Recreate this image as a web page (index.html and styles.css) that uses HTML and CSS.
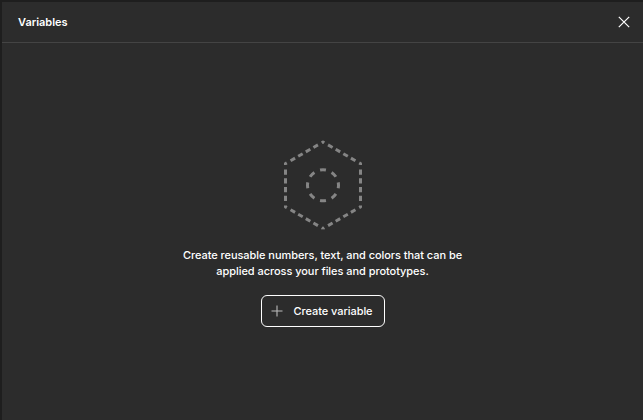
FILE: index.html
```html
<!DOCTYPE html>
<html lang="en">
<head>
<meta charset="utf-8">
<title>Variables</title>
<link rel="stylesheet" href="styles.css">
</head>
<body>
<section class="panel">
  <header class="header">
    <h1 class="title">Variables</h1>
    <button class="close" aria-label="Close">
      <svg width="12" height="12" viewBox="0 0 12 12"><path d="M.8.8l10.4 10.4M11.2.8L.8 11.2"/></svg>
    </button>
  </header>
  <main class="empty">
    <svg class="art" width="80" height="90" viewBox="0 0 80 90">
      <path pathLength="259.8" stroke-dasharray="1.5 4.35 5.2 3.6 5.2 3.6 5.2 3.6 5.2 4.35 1.5 0" d="M40 2L77.5 23.6V66.9L40 88.5L2.5 66.9V23.6Z"/>
      <circle cx="40" cy="45.3" r="15.5" pathLength="96" stroke-dasharray="6 6" stroke-dashoffset="3"/>
    </svg>
    <p class="message">Create reusable numbers, text, and colors that can be<br>applied across your files and prototypes.</p>
    <button class="create">
      <svg width="12" height="12" viewBox="0 0 12 12"><path d="M6 .5v11M.5 6h11"/></svg>
      <span>Create variable</span>
    </button>
  </main>
</section>
</body>
</html>
```
FILE: styles.css
```css
* { box-sizing: border-box; }
body {
  margin: 0;
  height: 420px;
  padding: 2px 0 0 2px;
  overflow: hidden;
  background: #1e1e1e;
  color: #fff;
  font: 500 11px/16px Inter, sans-serif;
}
button {
  padding: 0;
  border: 0;
  background: none;
  color: inherit;
  font: inherit;
}
svg { display: block; fill: none; }
.panel {
  height: 418px;
  background: #2c2c2c;
}
.header {
  display: flex;
  align-items: center;
  justify-content: space-between;
  height: 41px;
  padding: 0 13px 0 16px;
  border-bottom: 1px solid #444;
}
.title {
  margin: 0;
  font-size: 11px;
  font-weight: 600;
}
.close svg { stroke: #fff; stroke-width: 1.2; }
.empty {
  display: flex;
  flex-direction: column;
  align-items: center;
  padding-top: 97px;
}
.art { stroke: #858585; stroke-width: 3; stroke-linejoin: round; }
.message {
  margin: 17px 0 16px;
  text-align: center;
  letter-spacing: -0.05px;
}
.create {
  display: flex;
  align-items: center;
  gap: 11px;
  width: 124px;
  height: 32px;
  padding-left: 9px;
  border: 1px solid #fff;
  border-radius: 6px;
  letter-spacing: -0.06px;
}
.create svg { stroke: #bbb; stroke-width: 1.1; }
```
